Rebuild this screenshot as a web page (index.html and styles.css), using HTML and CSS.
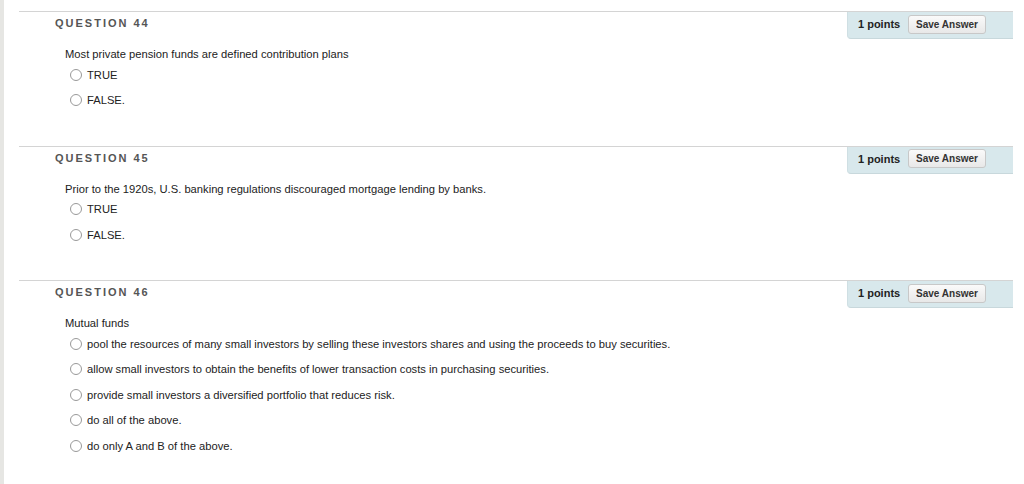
FILE: index.html
```html
<!DOCTYPE html>
<html lang="en">
<head>
    <meta charset="UTF-8">
    <title>Test</title>
    <link rel="stylesheet" href="styles.css">
</head>
<body>
    <div class="page">
        <div class="question">
            <div class="q-head">
                <h3 class="q-title">QUESTION 44</h3>
                <div class="points">
                    <span class="pts">1 points</span>
                    <button class="save-btn">Save Answer</button>
                </div>
            </div>
            <p class="q-text">Most private pension funds are defined contribution plans</p>
            <ul class="options">
                <li><span class="radio"></span>TRUE</li>
                <li><span class="radio"></span>FALSE.</li>
            </ul>
        </div>
        <div class="question">
            <div class="q-head">
                <h3 class="q-title">QUESTION 45</h3>
                <div class="points">
                    <span class="pts">1 points</span>
                    <button class="save-btn">Save Answer</button>
                </div>
            </div>
            <p class="q-text">Prior to the 1920s, U.S. banking regulations discouraged mortgage lending by banks.</p>
            <ul class="options">
                <li><span class="radio"></span>TRUE</li>
                <li><span class="radio"></span>FALSE.</li>
            </ul>
        </div>
        <div class="question">
            <div class="q-head">
                <h3 class="q-title">QUESTION 46</h3>
                <div class="points">
                    <span class="pts">1 points</span>
                    <button class="save-btn">Save Answer</button>
                </div>
            </div>
            <p class="q-text">Mutual funds</p>
            <ul class="options">
                <li><span class="radio"></span>pool the resources of many small investors by selling these investors shares and using the proceeds to buy securities.</li>
                <li><span class="radio"></span>allow small investors to obtain the benefits of lower transaction costs in purchasing securities.</li>
                <li><span class="radio"></span>provide small investors a diversified portfolio that reduces risk.</li>
                <li><span class="radio"></span>do all of the above.</li>
                <li><span class="radio"></span>do only A and B of the above.</li>
            </ul>
        </div>
    </div>
</body>
</html>
```

FILE: styles.css
```css
body {
    margin: 0;
    padding: 0;
    font-family: "Liberation Sans", Arial, sans-serif;
    color: #222;
    background: #fff;
    border-left: 4px solid #e6e6e3;
    min-height: 484px;
    box-sizing: border-box;
}
.page {
    padding-top: 11px;
    padding-left: 15px;
}
.question {
    width: 994px;
    height: 133.5px;
    border-top: 1px solid #d4d4d4;
}
.q-head {
    display: flex;
    justify-content: space-between;
    align-items: flex-start;
}
.q-title {
    margin: 5px 0 0 36px;
    font-size: 11px;
    font-weight: bold;
    letter-spacing: 2px;
    color: #555;
}
.points {
    width: 166px;
    height: 27px;
    box-sizing: border-box;
    background: #d8e8ec;
    border-bottom: 1px solid #c8d8dc;
    border-left: 1px solid #cfdfe3;
    border-radius: 0 0 0 4px;
    display: flex;
    align-items: center;
    padding-left: 10px;
    padding-bottom: 2px;
}
.pts {
    font-size: 11px;
    font-weight: bold;
    color: #222;
    width: 50px;
}
.save-btn {
    font-family: "Liberation Sans", Arial, sans-serif;
    font-size: 10px;
    font-weight: bold;
    color: #333;
    height: 19px;
    width: 78px;
    padding: 0;
    border: 1px solid #c8c8c8;
    border-radius: 3px;
    background: linear-gradient(#fafafa, #e8e8e8);
}
.q-text {
    margin: 9px 0 0 46px;
    font-size: 11.2px;
    color: #222;
}
.options {
    list-style: none;
    margin: 2px 0 0 51px;
    padding: 0;
}
.options li {
    display: flex;
    align-items: center;
    height: 25.5px;
    font-size: 11.2px;
    color: #222;
}
.radio {
    width: 10px;
    height: 10px;
    border: 1px solid #999;
    border-radius: 50%;
    background: #fff;
    margin-right: 5px;
}
```
